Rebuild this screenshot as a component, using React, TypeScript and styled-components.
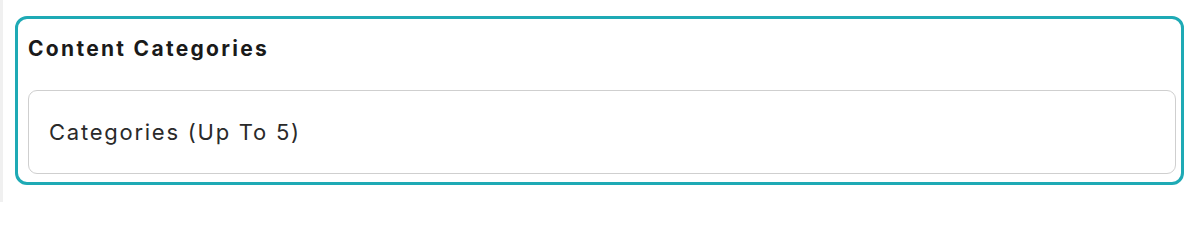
import React from "react";
import styled, { createGlobalStyle } from "styled-components";

const GlobalStyle = createGlobalStyle`
  html, body {
    margin: 0;
    padding: 0;
    background: #ffffff;
  }
  body {
    font-family: Inter, "Noto Sans", sans-serif;
  }
`;

const Page = styled.div`
  box-sizing: border-box;
  width: 1200px;
  height: 202px;
  border-left: 3px solid #f0f0f0;
  padding: 16px 16px 0 12px;
`;

const Card = styled.section`
  box-sizing: border-box;
  width: 1169px;
  height: 169px;
  border: 3px solid #1eaab5;
  border-radius: 12px;
  padding: 15px 5px 8px 10px;
  display: flex;
  flex-direction: column;
`;

const Title = styled.h2`
  margin: 0;
  font-family: Inter, "Noto Sans", sans-serif;
  font-size: 21px;
  line-height: 30px;
  font-weight: 700;
  letter-spacing: 2.3px;
  color: #1a1a1a;
`;

const Field = styled.div`
  box-sizing: border-box;
  margin-top: 26px;
  height: 84px;
  border: 1px solid #cfcfcf;
  border-radius: 9px;
  padding: 0 20px;
  display: flex;
  align-items: center;
`;

const Placeholder = styled.span`
  font-family: Inter, "Noto Sans", sans-serif;
  font-size: 22px;
  font-weight: 400;
  letter-spacing: 1.75px;
  color: #2a2a2a;
`;

export default function App() {
  return (
    <>
      <GlobalStyle />
      <Page>
        <Card>
          <Title>Content Categories</Title>
          <Field>
            <Placeholder>Categories (Up To 5)</Placeholder>
          </Field>
        </Card>
      </Page>
    </>
  );
}
